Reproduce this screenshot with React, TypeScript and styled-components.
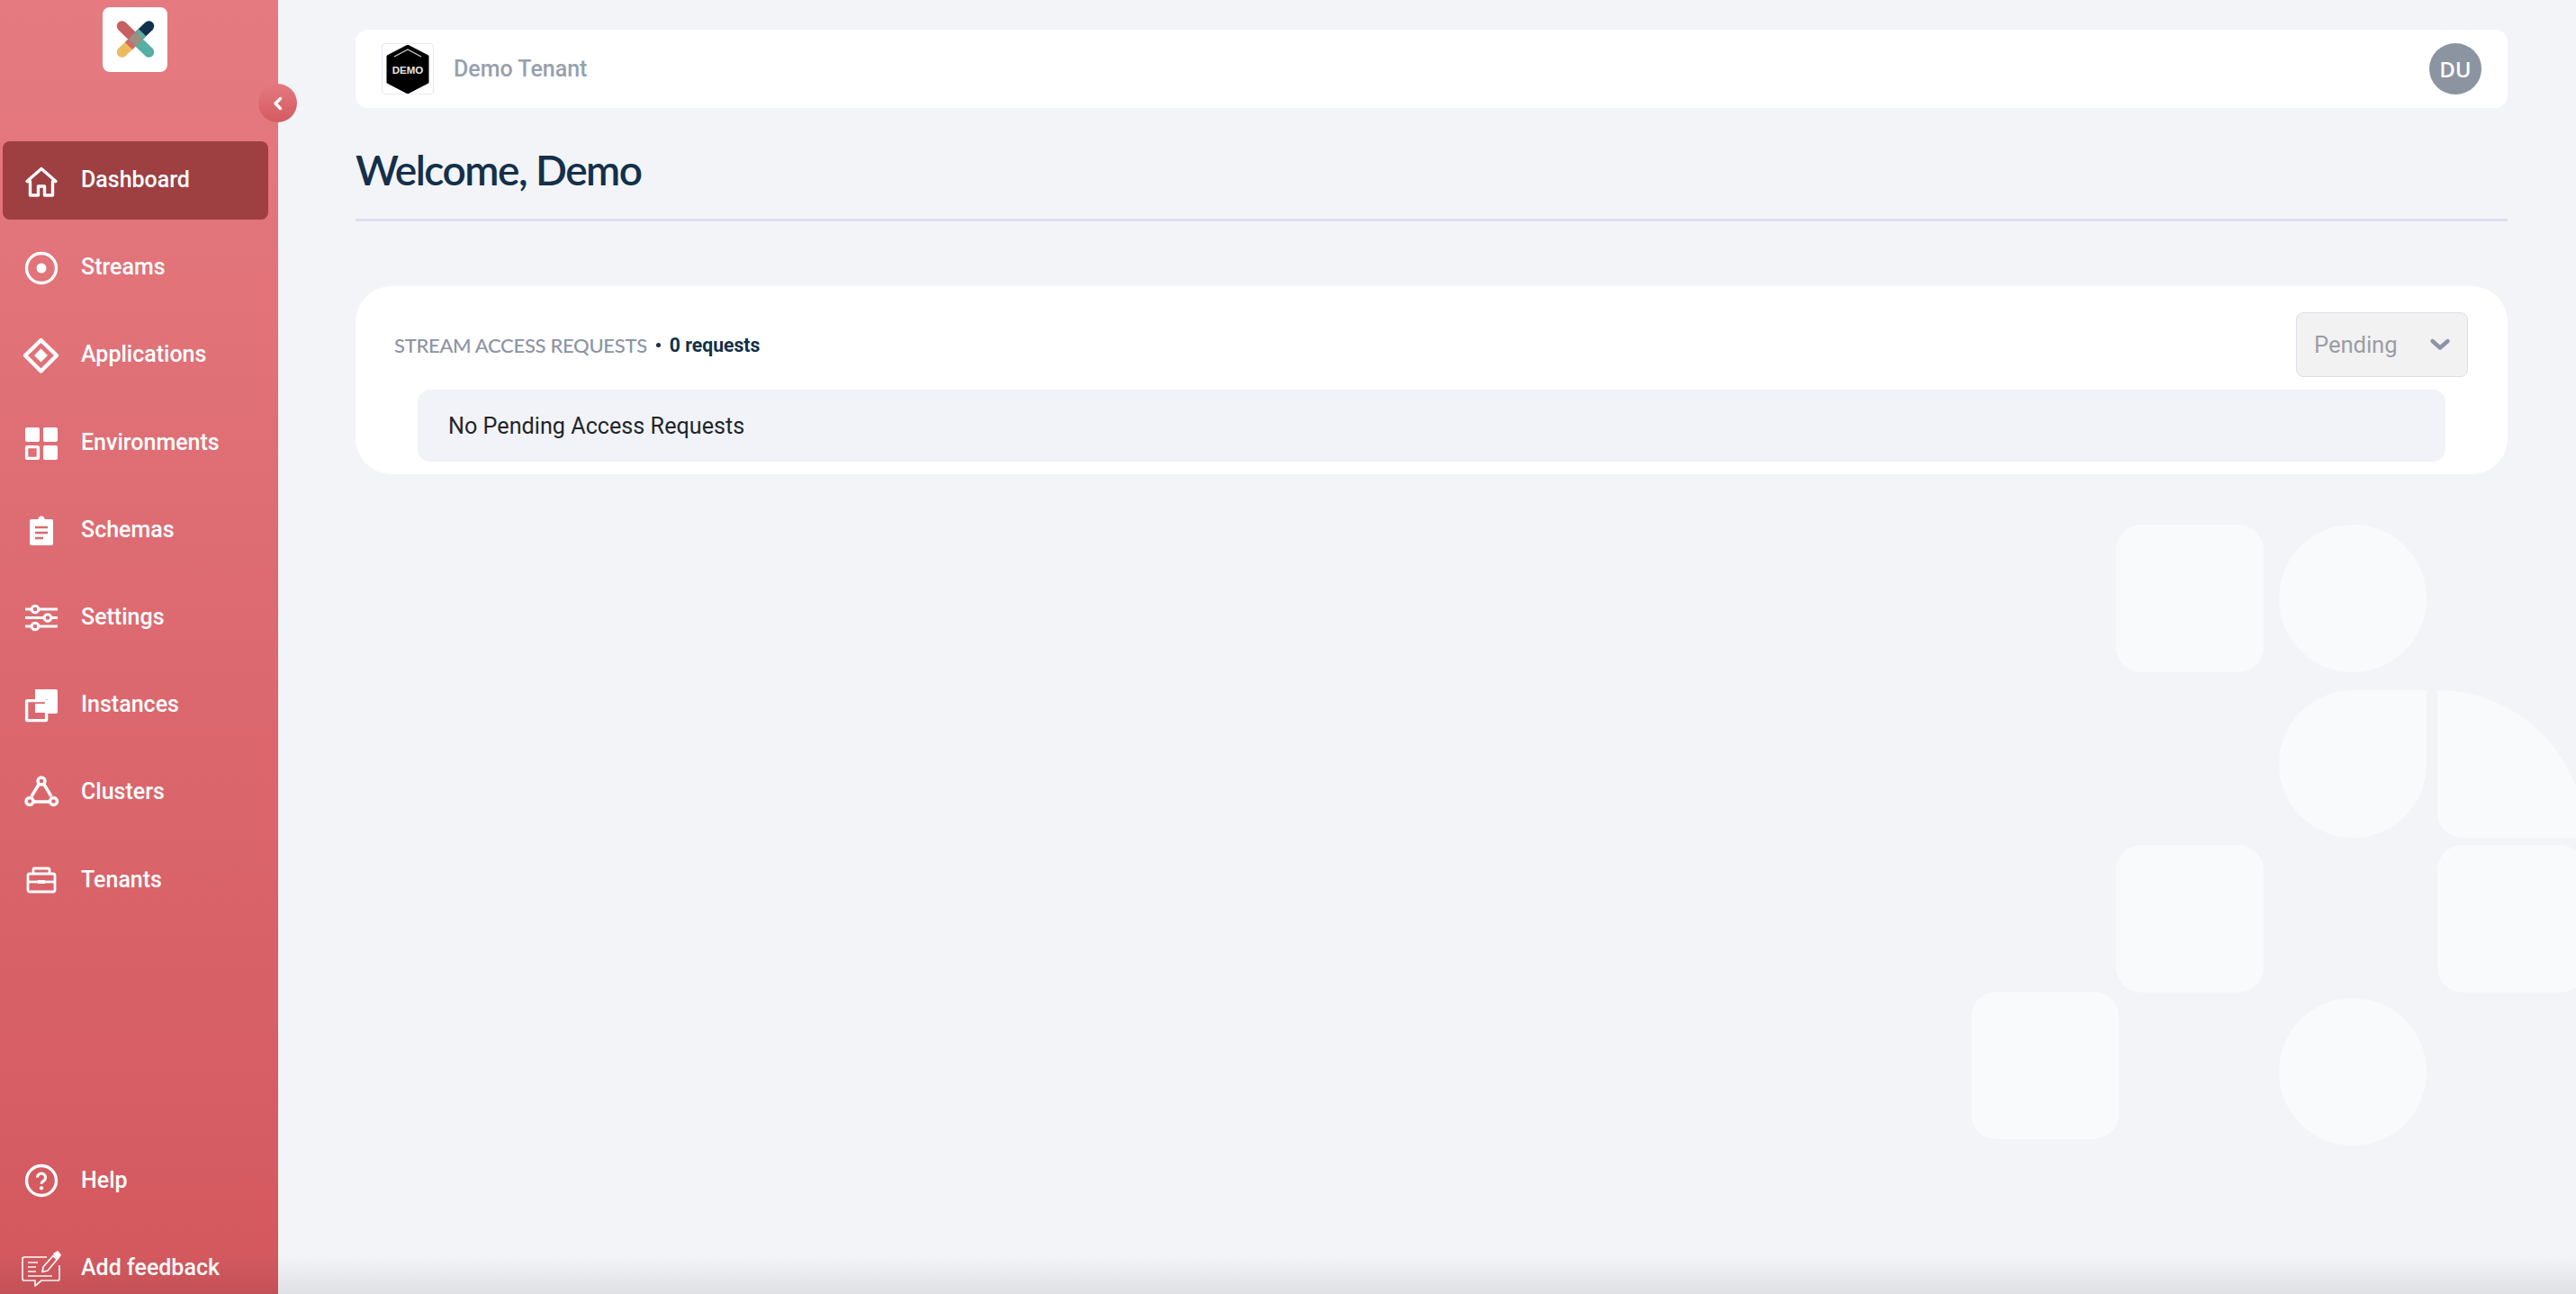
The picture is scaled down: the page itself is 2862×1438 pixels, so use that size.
import styled, { createGlobalStyle } from "styled-components";
import { ReactNode } from "react";

const GlobalStyle = createGlobalStyle`
   html, body {
      margin: 0;
      padding: 0;
      height: 100%;
      overflow: hidden;
      background: #f2f3f8;
      font-family: Roboto, "Liberation Sans", sans-serif;
   }
`

const Page = styled.div`
   position: relative;
   display: flex;
   height: 100vh;
   overflow: hidden;
   background: #f3f4f8;

   &::after {
      content: "";
      position: absolute;
      left: 0;
      right: 0;
      bottom: 0;
      height: 44px;
      background: linear-gradient(to bottom, rgba(0, 0, 0, 0), rgba(0, 0, 0, 0.08));
      pointer-events: none;
   }
`

const Sidebar = styled.aside`
   position: relative;
   flex: 0 0 309px;
   display: flex;
   flex-direction: column;
   background: linear-gradient(to bottom, #e57b81, #d3585e);
`

const LogoBox = styled.div`
   width: 72px;
   height: 72px;
   margin: 8px 0 0 114px;
   display: flex;
   align-items: center;
   justify-content: center;
   background: #fff;
   border-radius: 8px;
`

const Toggle = styled.button`
   position: absolute;
   top: 93px;
   left: 287px;
   width: 43px;
   height: 43px;
   padding: 0;
   border: none;
   border-radius: 50%;
   display: flex;
   align-items: center;
   justify-content: center;
   background: linear-gradient(to bottom, #e37a80, #d45a60);
`

const NavList = styled.nav`
   display: flex;
   flex-direction: column;
   gap: 10.2px;
   margin-top: 77px;
   padding-left: 3px;
`

const FooterList = styled(NavList)`
   margin-top: auto;
   margin-bottom: -15px;
`

const NavItem = styled.a<{ $active?: boolean }>`
   width: 295px;
   height: 87px;
   box-sizing: border-box;
   padding-left: 25px;
   display: flex;
   align-items: center;
   gap: 26px;
   border-radius: 8px;
   color: #fff;
   font-size: 25px;
   font-weight: 500;
   background: ${(props) => (props.$active ? "#9e3f42" : "transparent")};
`

const NavLabel = styled.span`
   margin-top: -2px;
`

const NavIconSlot = styled.svg`
   flex: 0 0 36px;
   width: 36px;
   height: 36px;
   overflow: visible;
`

const Main = styled.main`
   position: relative;
   flex: 1;
   min-width: 0;
   padding: 33px 76px 0 86px;
`

const Backdrop = styled.svg`
   position: absolute;
   left: 1881px;
   top: 583px;
   width: 672px;
   height: 690px;
`

const Content = styled.div`
   position: relative;
`

const TopBar = styled.header`
   height: 87px;
   box-sizing: border-box;
   padding: 0 29px;
   display: flex;
   align-items: center;
   justify-content: space-between;
   background: #fff;
   border-radius: 14px;
`

const TenantRow = styled.div`
   display: flex;
   align-items: center;
   gap: 22px;
`

const TenantLogo = styled.div`
   width: 58px;
   height: 57px;
   box-sizing: border-box;
   display: flex;
   align-items: center;
   justify-content: center;
   border: 1px solid #e8e8f4;
   border-radius: 4px;
`

const TenantName = styled.span`
   color: #97a0af;
   font-size: 25px;
   font-weight: 500;
`

const Avatar = styled.div`
   width: 58px;
   height: 57px;
   display: flex;
   align-items: center;
   justify-content: center;
   border-radius: 50%;
   background: #8c94a1;
   color: #fff;
   font-family: "Open Sans", sans-serif;
   font-size: 24px;
   font-weight: 600;
`

const PageTitle = styled.h1`
   margin: 0;
   height: 126px;
   box-sizing: border-box;
   padding-top: 14px;
   display: flex;
   align-items: center;
   border-bottom: 3px solid #dedeee;
   color: #14304a;
   font-family: Lato, sans-serif;
   font-size: 46px;
   font-weight: 600;
   letter-spacing: -1.5px;
`

const Card = styled.section`
   margin-top: 72px;
   height: 209px;
   box-sizing: border-box;
   padding: 29px 44px 14px 43px;
   background: #fff;
   border-radius: 40px;
`

const CardHead = styled.div`
   height: 72px;
   display: flex;
   align-items: center;
   justify-content: space-between;
`

const CardTitle = styled.div`
   display: flex;
   align-items: center;
   gap: 10px;
   font-size: 22px;
`

const TitleLabel = styled.span`
   color: #8c94a5;
   font-family: Lato, sans-serif;
   font-weight: 500;
   letter-spacing: -0.3px;
`

const Dot = styled.span`
   width: 5px;
   height: 5px;
   border-radius: 50%;
   background: #14304a;
`

const RequestCount = styled.span`
   color: #14304a;
   font-size: 21.2px;
   font-weight: 700;
`

const SelectBox = styled.div`
   width: 191px;
   height: 72px;
   box-sizing: border-box;
   padding: 0 18px 0 19px;
   display: flex;
   align-items: center;
   justify-content: space-between;
   background: #f2f2f3;
   border: 1px solid #dfdfeb;
   border-radius: 8px;
   color: #9a9da3;
   font-size: 25.5px;
`

const EmptyRow = styled.div`
   margin: 14px 25px 0 26px;
   height: 80px;
   box-sizing: border-box;
   padding-left: 34px;
   display: flex;
   align-items: center;
   background: #f2f3f8;
   border-radius: 14px;
   color: #212529;
   font-size: 25.2px;
`

const Icon = ({ children }: { children: ReactNode }) => (
   <NavIconSlot viewBox="0 0 36 36" fill="none" stroke="#fff" strokeWidth="3.4">
      {children}
   </NavIconSlot>
)

const items = [
   {
      label: "Dashboard",
      active: true,
      icon: <path d="M2 18.5 18 4.5l16 14h-3.5V34h-9V24h-7v10h-9V18.5Z" strokeLinejoin="round" />,
   },
   {
      label: "Streams",
      icon: (
         <>
            <circle cx="18" cy="18" r="16.5" />
            <circle cx="18" cy="18" r="5.5" fill="#fff" stroke="none" />
         </>
      ),
   },
   {
      label: "Applications",
      icon: (
         <>
            <path d="M18 1 35.5 18 18 35.5.5 18Z" strokeWidth="4.4" strokeLinejoin="round" transform="translate(-.5 0)" />
            <path d="M17.5 10.5 25 18l-7.5 7.5L10 18Z" fill="#fff" stroke="none" />
         </>
      ),
   },
   {
      label: "Environments",
      icon: (
         <>
            <rect x="0" y="1" width="16" height="16" rx="2" fill="#fff" stroke="none" />
            <rect x="20" y="1" width="16" height="16" rx="2" fill="#fff" stroke="none" />
            <rect x="1.6" y="22.6" width="12.8" height="12.8" rx="1" />
            <rect x="20" y="21" width="16" height="16" rx="2" fill="#fff" stroke="none" />
         </>
      ),
   },
   {
      label: "Schemas",
      icon: (
         <>
            <path
               d="M7 6h7.5a3.5 3.5 0 0 1 7 0H29a2 2 0 0 1 2 2v25a2 2 0 0 1-2 2H7a2 2 0 0 1-2-2V8a2 2 0 0 1 2-2Z"
               fill="#fff"
               stroke="none"
            />
            <path d="M11 15h14M11 21h14M11 27h9" stroke="#da6970" strokeWidth="2.6" />
         </>
      ),
   },
   {
      label: "Settings",
      icon: (
         <>
            <path d="M0 9h36M0 18.5h36M0 28h36" strokeWidth="3.2" />
            <circle cx="11" cy="9" r="3.8" fill="#da6970" strokeWidth="3" />
            <circle cx="25" cy="18.5" r="3.8" fill="#da6970" strokeWidth="3" />
            <circle cx="11" cy="28" r="3.8" fill="#da6970" strokeWidth="3" />
         </>
      ),
   },
   {
      label: "Instances",
      icon: (
         <>
            <path d="M11 0h23a2 2 0 0 1 2 2v23a2 2 0 0 1-2 2h-9V11H11V0Z" fill="#fff" stroke="none" />
            <rect x="1.6" y="12.6" width="22" height="22" rx="1" />
            <rect x="11" y="16" width="11" height="10" fill="#fff" stroke="none" />
         </>
      ),
   },
   {
      label: "Clusters",
      icon: (
         <>
            <path d="M15.5 8 7 22M20.5 8 29 22M10 28h16" />
            <circle cx="18" cy="5" r="4" />
            <circle cx="5" cy="27.5" r="4" />
            <circle cx="31.5" cy="27.5" r="4" />
         </>
      ),
   },
   {
      label: "Tenants",
      icon: (
         <>
            <rect x="3" y="11" width="30" height="20" rx="2" strokeWidth="2.8" />
            <path d="M9 11V6.5A1.5 1.5 0 0 1 10.5 5h15A1.5 1.5 0 0 1 27 6.5V11" strokeWidth="2.8" />
            <path d="M3 20h30" strokeWidth="2.8" />
            <rect x="14" y="18" width="8" height="4" fill="#fff" stroke="none" />
         </>
      ),
   },
]

const footerItems = [
   {
      label: "Help",
      icon: (
         <>
            <circle cx="18" cy="18" r="16.5" />
            <path d="M13.5 14.5a4.5 4.5 0 1 1 6.8 3.9c-1.5.9-2.3 1.6-2.3 3.3" strokeWidth="3" />
            <circle cx="18" cy="26.3" r="2.1" fill="#fff" stroke="none" />
         </>
      ),
   },
   {
      label: "Add feedback",
      icon: (
         <g strokeWidth="1.7" strokeLinejoin="round">
            <path d="M24 5H-1a2 2 0 0 0-2 2v22a2 2 0 0 0 2 2h12v6l7-6h18a2 2 0 0 0 2-2V14" />
            <path d="M3 11h11M3 16h9M3 21h9M3 26h27" />
            <path d="M19 21.5 20 16 31 3.5 35.5 7.5 25 20Z" />
            <path d="M32 1.5 36 -1 39 2.5 36.5 6.5Z" fill="#fff" />
         </g>
      ),
   },
]

const App = () => {
   return (
      <Page>
         <GlobalStyle />
         <Sidebar>
            <LogoBox>
               <svg width="72" height="72" viewBox="0 0 72 72" fill="none" strokeWidth="11.5" strokeLinecap="round">
                  <path d="M51.5 21 39 33" stroke="#14304a" />
                  <path d="M21.5 50 32 40" stroke="#ebbb5e" />
                  <path d="M51.5 50 36.5 35.5" stroke="#55afa4" />
                  <path d="M36.5 35.5 44 28" stroke="#55afa4" strokeLinecap="butt" />
                  <path d="M21.5 21 36.5 35.5" stroke="#c95f63" />
                  <path d="M29 43 36.5 35.5" stroke="#cf6a66" strokeLinecap="butt" />
                  <path d="M32.5 31.5 41 39.5" stroke="#9a9080" strokeLinecap="butt" />
               </svg>
            </LogoBox>
            <Toggle aria-label="collapse">
               <svg width="14" height="16" viewBox="0 0 14 16" fill="none" stroke="#fff" strokeWidth="3.4" strokeLinecap="round" strokeLinejoin="round">
                  <path d="M9.5 2.5 4 8l5.5 5.5" />
               </svg>
            </Toggle>
            <NavList>
               {items.map((item) => (
                  <NavItem key={item.label} $active={item.active}>
                     <Icon>{item.icon}</Icon>
                     <NavLabel>{item.label}</NavLabel>
                  </NavItem>
               ))}
            </NavList>
            <FooterList>
               {footerItems.map((item) => (
                  <NavItem key={item.label}>
                     <Icon>{item.icon}</Icon>
                     <NavLabel>{item.label}</NavLabel>
                  </NavItem>
               ))}
            </FooterList>
         </Sidebar>
         <Main>
            <Backdrop viewBox="0 0 672 690" fill="#f9fafc">
               <rect x="161" y="0" width="164" height="164" rx="28" />
               <circle cx="424" cy="82" r="82" />
               <path d="M424 184h82v82a82 82 0 1 1-82-82Z" />
               <path d="M518 184a164 164 0 0 1 164 164H546a28 28 0 0 1-28-28Z" />
               <rect x="161" y="356" width="164" height="164" rx="28" />
               <rect x="518" y="356" width="164" height="164" rx="28" />
               <rect x="0" y="519" width="164" height="164" rx="28" />
               <circle cx="424" cy="608" r="82" />
            </Backdrop>
            <Content>
               <TopBar>
                  <TenantRow>
                     <TenantLogo>
                        <svg width="50" height="54" viewBox="0 0 50 54">
                           <path d="M25 0 48 12V42L25 54 2 42V12Z" fill="#000" stroke="#000" strokeLinejoin="round" />
                           <path d="M10 13 25 5 40 13" fill="none" stroke="#ccc" strokeWidth="1.4" />
                           <text x="25" y="32" textAnchor="middle" fill="#e8e8e8" fontSize="11.5" fontWeight="700" fontFamily="Liberation Sans, sans-serif">
                              DEMO
                           </text>
                        </svg>
                     </TenantLogo>
                     <TenantName>Demo Tenant</TenantName>
                  </TenantRow>
                  <Avatar>DU</Avatar>
               </TopBar>
               <PageTitle>Welcome, Demo</PageTitle>
               <Card>
                  <CardHead>
                     <CardTitle>
                        <TitleLabel>STREAM ACCESS REQUESTS</TitleLabel>
                        <Dot />
                        <RequestCount>0 requests</RequestCount>
                     </CardTitle>
                     <SelectBox>
                        Pending
                        <svg width="24" height="16" viewBox="0 0 24 16" fill="none" stroke="#8c94a5" strokeWidth="4.4" strokeLinecap="round" strokeLinejoin="round">
                           <path d="M3.5 4 12 11.5 20.5 4" />
                        </svg>
                     </SelectBox>
                  </CardHead>
                  <EmptyRow>No Pending Access Requests</EmptyRow>
               </Card>
            </Content>
         </Main>
      </Page>
   )
}

export default App;
